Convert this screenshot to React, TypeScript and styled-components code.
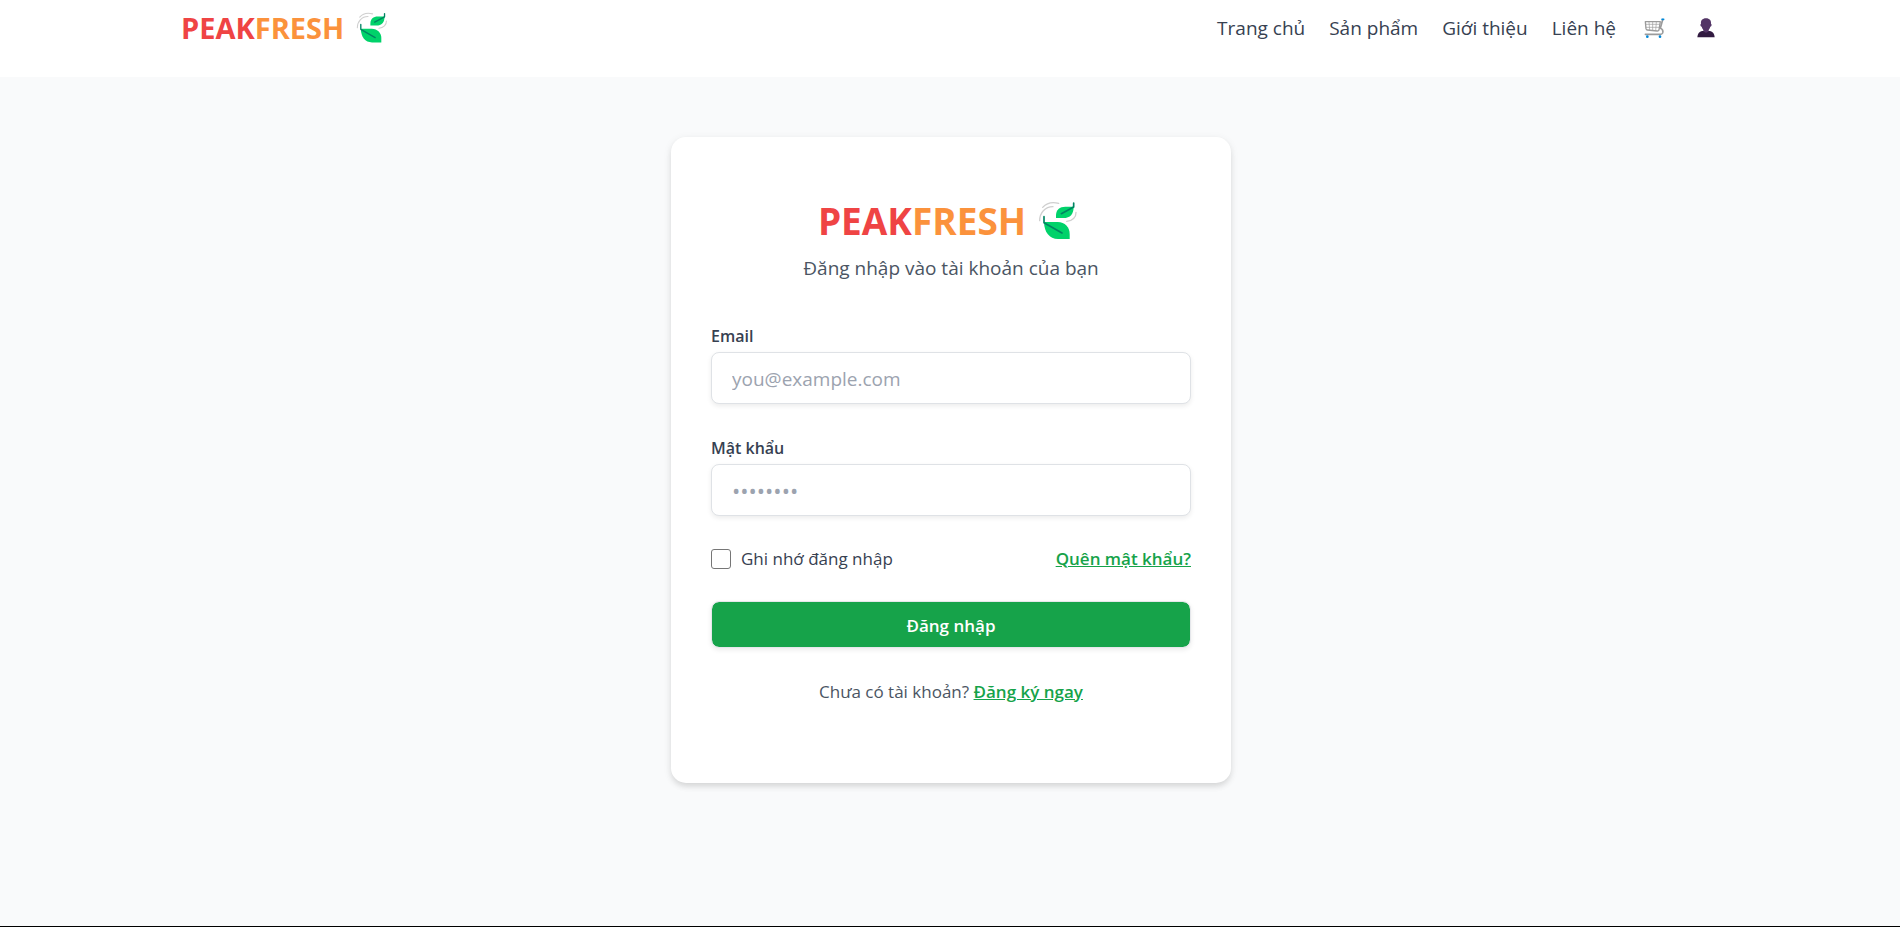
import React from "react";
import styled, { createGlobalStyle } from "styled-components";

const GlobalStyle = createGlobalStyle`
  *, *::before, *::after { box-sizing: border-box; }
  body {
    margin: 0;
    background: #f9fafb;
    color: #374151;
    font-family: "Open Sans", "Noto Sans", sans-serif;
    font-size: 17px;
    line-height: 24px;
  }
`;

const Page = styled.div`
  display: flex;
  flex-direction: column;
  min-height: 100vh;
`;

const Header = styled.header`
  height: 77px;
  background: #ffffff;
`;

const HeaderInner = styled.div`
  display: flex;
  justify-content: space-between;
  align-items: center;
  max-width: 1538px;
  height: 56px;
  margin: 0 auto;
`;

const Brand = styled.span<{ $large?: boolean }>`
  display: inline-flex;
  align-items: center;
  gap: 12px;
  font-size: ${(p) => (p.$large ? 37 : 29)}px;
  line-height: ${(p) => (p.$large ? 48 : 40)}px;
  font-weight: 700;
`;

const BrandLink = styled.a`
  display: flex;
  text-decoration: none;
`;

const Peak = styled.span`
  color: #ef4444;
`;

const Fresh = styled.span`
  color: #fb923c;
`;

const Nav = styled.nav`
  display: flex;
  align-items: center;
  gap: 24px;
`;

const NavLink = styled.a`
  color: #374151;
  font-size: 19px;
  line-height: 30px;
  text-decoration: none;
`;

const IconLink = styled.a`
  display: flex;
  padding: 0 4px;
`;

const Main = styled.main`
  flex: 1;
  display: flex;
  justify-content: center;
  align-items: flex-start;
  padding: 60px 20px 60px 22px;
`;

const Card = styled.section`
  width: 100%;
  max-width: 560px;
  padding: 60px 40px 79px;
  border-radius: 15px;
  background: #ffffff;
  box-shadow: 0 4px 6px -1px rgba(0, 0, 0, 0.1), 0 2px 8px rgba(0, 0, 0, 0.08);
`;

const CardHead = styled.div`
  display: flex;
  flex-direction: column;
  align-items: center;
  gap: 8px;
  margin-bottom: 41px;
`;

const Title = styled.h1`
  display: flex;
  margin: 0;
  padding-right: 6px;
`;

const Subtitle = styled.p`
  margin: 0;
  color: #4b5563;
  font-size: 19px;
  line-height: 30px;
`;

const Form = styled.form`
  display: flex;
  flex-direction: column;
  gap: 32px;
`;

const Field = styled.div`
  display: flex;
  flex-direction: column;
  gap: 4px;
`;

const Label = styled.label`
  font-size: 16px;
  font-weight: 600;
`;

const Input = styled.input`
  width: 100%;
  height: 52px;
  padding: 2px 20px 0;
  border: 1px solid #dfe2e6;
  border-radius: 8px;
  background: #ffffff;
  color: #374151;
  font-family: inherit;
  font-size: 19px;
  box-shadow: 0 2px 5px rgba(0, 0, 0, 0.08);
  &::placeholder { color: #9ca3af; opacity: 1; }
  &[type="password"] { padding-top: 0; font-size: 22px; }
`;

const Options = styled.div`
  display: flex;
  justify-content: space-between;
  align-items: center;
  height: 21px;
`;

const Remember = styled.label`
  display: flex;
  align-items: center;
  gap: 10px;
`;

const Checkbox = styled.input`
  appearance: none;
  width: 20px;
  height: 20px;
  margin: 0;
  border: 1px solid #767676;
  border-radius: 3px;
  background: #ffffff;
  &:checked { background: #16a34a; }
`;

const GreenLink = styled.a`
  color: #16a34a;
  font-weight: 600;
  text-decoration: underline;
`;

const Submit = styled.button`
  height: 47px;
  padding: 1px 20px 0;
  border: 1px solid #e5e7eb;
  border-radius: 8px;
  background: #16a34a;
  background-clip: padding-box;
  color: #ffffff;
  font-family: inherit;
  font-size: 17px;
  font-weight: 600;
  box-shadow: 0 2px 5px rgba(0, 0, 0, 0.08);
`;

const Register = styled.p`
  margin: 0;
  color: #4b5563;
  text-align: center;
`;

const Footer = styled.footer`
  height: 1px;
  background: #000000;
`;

const Leaves = ({ size }: { size: number }) => (
  <svg width={size} height={size} viewBox="36 36 120 120" fill="none" aria-hidden="true">
    <g stroke="#cfcfcf" strokeWidth="4" strokeLinecap="round">
      <path d="M50 55C62 42 80 38 98 43" />
      <path d="M41 95C41 72 57 53 81 53" />
      <path d="M150 70C151 84 139 96 122 97" />
    </g>
    <path d="M54 99H95C117 99 131 116 131 134V150H96C70 150 55 130 54 99Z" fill="#00d26a" />
    <path d="M143 53C143 75 133 87 112 87H90V79C90 62 101 53 118 53Z" fill="#00d26a" />
    <g stroke="#008463" strokeWidth="5" strokeLinecap="round" strokeLinejoin="round">
      <path d="M54 83V101L108 132" />
      <path d="M143 42V54L106 74" />
    </g>
  </svg>
);

const Cart = () => (
  <svg width="21" height="21" viewBox="0 0 63 63" fill="none" aria-hidden="true">
    <g stroke="#9b9b9b" strokeLinecap="round" strokeLinejoin="round">
      <path d="M4 11H49L45 36Q44 39 40 39L10 36Q7 36 6 32Z" strokeWidth="4" />
      <path d="M15 12L17 36M26 12V37M37 12L35 38M5 19H47M6 28H45" strokeWidth="2" />
      <path d="M56 5L49 31Q59 35 56 45Q54 49 49 49H4" strokeWidth="5" />
    </g>
    <path d="M54 4H59" stroke="#0087d8" strokeWidth="5" strokeLinecap="round" />
    <circle cx="10" cy="56" r="4" fill="#0087d8" />
    <circle cx="48" cy="56" r="4" fill="#0087d8" />
  </svg>
);

const User = () => (
  <svg width="18" height="20" viewBox="0 0 54 60" aria-hidden="true">
    <path d="M1 58Q2 42 15 39H39Q52 42 53 58Z" fill="#321b41" />
    <path d="M19 31H35V40Q27 48 19 40Z" fill="#533566" />
    <path d="M27 1C38 1 43 8 42 17C45 18 44 26 40 26C38 34 33 38 27 38C21 38 16 34 14 26C10 26 9 18 12 17C11 8 16 1 27 1Z" fill="#533566" />
  </svg>
);

const Logo = ({ large }: { large?: boolean }) => (
  <Brand $large={large}>
    <span>
      <Peak>PEAK</Peak>
      <Fresh>FRESH</Fresh>
    </span>
    <Leaves size={large ? 40 : 32} />
  </Brand>
);

const links = ["Trang chủ", "Sản phẩm", "Giới thiệu", "Liên hệ"];

export default function App() {
  return (
    <Page>
      <GlobalStyle />
      <Header>
        <HeaderInner>
          <BrandLink href="#">
            <Logo />
          </BrandLink>
          <Nav>
            {links.map((text) => (
              <NavLink key={text} href="#">{text}</NavLink>
            ))}
            <IconLink href="#" aria-label="Giỏ hàng"><Cart /></IconLink>
            <IconLink href="#" aria-label="Tài khoản"><User /></IconLink>
          </Nav>
        </HeaderInner>
      </Header>
      <Main>
        <Card>
          <CardHead>
            <Title><Logo large /></Title>
            <Subtitle>Đăng nhập vào tài khoản của bạn</Subtitle>
          </CardHead>
          <Form onSubmit={(e) => e.preventDefault()}>
            <Field>
              <Label htmlFor="email">Email</Label>
              <Input id="email" type="email" placeholder="you@example.com" />
            </Field>
            <Field>
              <Label htmlFor="password">Mật khẩu</Label>
              <Input id="password" type="password" placeholder="••••••••" />
            </Field>
            <Options>
              <Remember>
                <Checkbox type="checkbox" />
                Ghi nhớ đăng nhập
              </Remember>
              <GreenLink href="#">Quên mật khẩu?</GreenLink>
            </Options>
            <Submit type="submit">Đăng nhập</Submit>
            <Register>
              Chưa có tài khoản? <GreenLink href="#">Đăng ký ngay</GreenLink>
            </Register>
          </Form>
        </Card>
      </Main>
      <Footer />
    </Page>
  );
}
